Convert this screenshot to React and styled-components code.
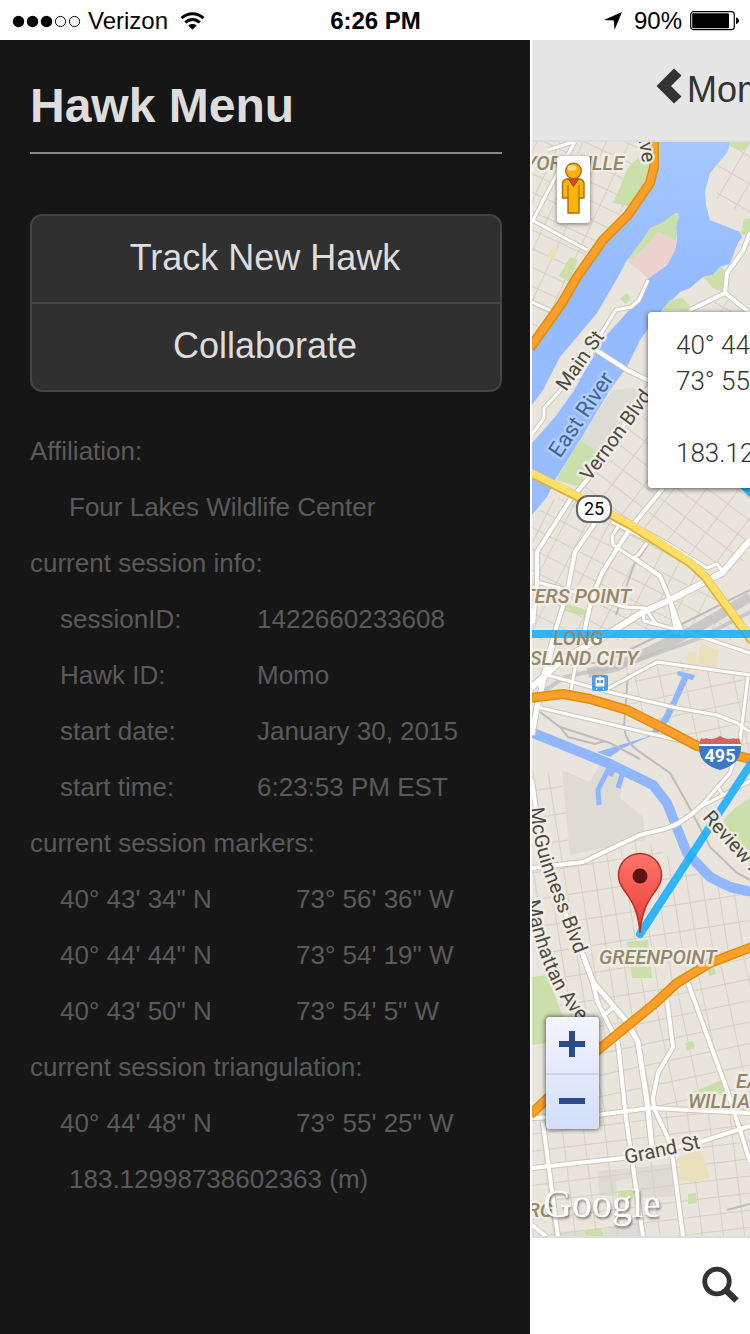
import React from "react";
import styled, { createGlobalStyle } from "styled-components";

const GlobalStyle = createGlobalStyle`
  *, *::before, *::after { box-sizing: border-box; }
  body {
    margin: 0;
    background: #fff;
    font-family: "Liberation Sans", Helvetica, Arial, sans-serif;
  }
  h1, h2, p, dl, dd, ul { margin: 0; padding: 0; }
`;

const Screen = styled.div`
  display: flex;
  flex-direction: column;
  min-height: 100vh;
`;

/* ---------- status bar ---------- */

const StatusBar = styled.header`
  display: grid;
  grid-template-columns: 1fr auto 1fr;
  align-items: center;
  height: 40px;
  padding: 0 11px 0 12px;
  background: #fff;
  color: #000;
  font-size: 24px;
  line-height: 42px;
`;

const StatusGroup = styled.div`
  display: flex;
  align-items: center;
  justify-content: ${(p) => (p.$end ? "flex-end" : "flex-start")};
  gap: ${(p) => (p.$end ? 8 : 6)}px;
`;

const Carrier = styled.span`
  margin-right: 6px;
`;

const Percent = styled.span`
  margin-left: 4px;
`;

const Clock = styled.strong`
  font-weight: 700;
`;

/* ---------- layout ---------- */

const Body = styled.div`
  flex: 1;
  display: grid;
  grid-template-columns: minmax(0, 530px) minmax(220px, 1fr);
`;

/* ---------- menu ---------- */

const Menu = styled.nav`
  padding: 34px 28px 48px 30px;
  background: #161616;
  color: #5a5a5a;
  font-size: 26px;
  line-height: 56px;
`;

const MenuTitle = styled.h1`
  padding-bottom: 14px;
  border-bottom: 2px solid #888;
  color: #ddd;
  font-size: 48px;
  line-height: 64px;
  font-weight: 700;
`;

const ButtonGroup = styled.div`
  margin: 60px 0 31px;
  border: 2px solid #444;
  border-radius: 12px;
  background: #303030;
  overflow: hidden;
`;

const MenuButton = styled.button`
  display: block;
  width: 100%;
  height: 86px;
  padding: 0 2px 2px 0;
  border: 0;
  background: transparent;
  color: #ddd;
  font: inherit;
  font-size: 36px;
  line-height: 84px;
  cursor: pointer;

  & + & {
    height: 88px;
    border-top: 2px solid #444;
  }
`;

const SectionTitle = styled.h2`
  font-size: 26px;
  line-height: 56px;
  font-weight: 400;
`;

const Detail = styled.p`
  padding-left: 39px;
`;

const InfoList = styled.dl`
  display: grid;
  grid-template-columns: 197px 1fr;
  padding-left: 30px;
`;

const CoordList = styled.ul`
  padding-left: 30px;
  list-style: none;
`;

const CoordRow = styled.li`
  display: grid;
  grid-template-columns: 236px 1fr;
`;

/* ---------- map page ---------- */

const Page = styled.main`
  display: flex;
  flex-direction: column;
  min-width: 0;
  border-left: 2px solid #fff;
  overflow: hidden;
`;

const PageHeader = styled.div`
  height: 102px;
  padding-left: 124px;
  border-bottom: 2px solid #ddd;
  background: #e6e6e6;
`;

const BackButton = styled.button`
  display: flex;
  align-items: center;
  gap: 5px;
  height: 100px;
  padding: 0;
  border: 0;
  background: transparent;
  color: #333;
  font: inherit;
  font-size: 36px;
  white-space: nowrap;
  cursor: pointer;

  svg { margin-bottom: 8px; flex: none; }
`;

const MapView = styled.div`
  position: relative;
  flex: 1;
  min-height: 400px;
  overflow: hidden;
  background: #e9e5dc;
`;

const MapCanvas = styled.svg`
  position: absolute;
  inset: 0;
  width: 100%;
  height: 100%;
  font-family: Roboto, sans-serif;
`;

const Pegman = styled.button`
  position: absolute;
  left: 25px;
  top: 14px;
  width: 33px;
  height: 67px;
  padding: 0;
  border: 0;
  border-radius: 3px;
  background: #fff;
  box-shadow: 0 1px 4px rgba(0, 0, 0, 0.5);

  svg { display: block; margin: 0 auto 4px; }
`;

const InfoWindow = styled.aside`
  position: absolute;
  left: 116px;
  top: 170px;
  width: 340px;
  height: 176px;
  padding: 15px 28px;
  border-radius: 4px;
  background: #fff;
  box-shadow: 0 1px 5px rgba(0, 0, 0, 0.65);
  color: #333;
  font-family: Roboto, sans-serif;
  font-size: 26px;
  font-weight: 300;
  line-height: 36px;
  white-space: nowrap;
`;

const InfoGap = styled.p`
  margin-top: 36px;
`;

const ZoomControl = styled.div`
  position: absolute;
  left: 14px;
  bottom: 107px;
  display: grid;
  width: 53px;
  border-radius: 4px;
  background: linear-gradient(#f3f5fd, #e1e8fa 55%, #d2defa);
  box-shadow: 0 0 4px 1px rgba(0, 0, 0, 0.55);
`;

const ZoomButton = styled.button`
  display: grid;
  place-items: center;
  height: 56px;
  padding: 0 2px 2px 0;
  border: 0;
  background: transparent;
  cursor: pointer;

  & + & { border-top: 2px solid #c9d5f3; }
`;

const Toolbar = styled.footer`
  height: 98px;
  padding: 28px 0 0 168px;
  border-top: 2px solid #ddd;
  background: #fff;
`;

const ToolButton = styled.button`
  display: block;
  padding: 0;
  border: 0;
  background: transparent;
  cursor: pointer;
`;

/* ---------- icons ---------- */

const SignalDots = () => (
  <svg width="70" height="14" viewBox="0 0 70 14" aria-label="Signal: 3 of 5">
    {[0, 1, 2].map((i) => (
      <circle key={i} cx={6.5 + i * 14} cy="7.5" r="5.7" />
    ))}
    {[3, 4].map((i) => (
      <circle key={i} cx={6.5 + i * 14} cy="7.5" r="5.1" fill="none" stroke="#000" />
    ))}
  </svg>
);

const Wifi = () => (
  <svg width="26" height="20" viewBox="0 0 26 20" aria-label="Wi-Fi">
    <g fill="none" stroke="#000" strokeWidth="3">
      <path d="M1.500 7.200C8 1.400 17 1.400 23.500 7.200" />
      <path d="M5.300 11.500c4.200-4 10.200-4 14.400 0" />
    </g>
    <path d="M12.500 18.800l-4.200-4.400c2.400-2 6-2 8.400 0z" />
  </svg>
);

const LocationArrow = () => (
  <svg width="18" height="18" viewBox="0 0 18 18" aria-label="Location on">
    <path d="M18 0L10.500 18 9.800 8.600 0 8z" />
  </svg>
);

const Battery = () => (
  <svg width="49" height="20" viewBox="0 0 49 20" aria-label="Battery">
    <rect x=".7" y=".7" width="43.600" height="18" rx="3" fill="none" stroke="#000" strokeWidth="1.200" />
    <rect x="2.200" y="2.200" width="36.800" height="15" rx="1" />
    <path d="M46 6.500c4 .8 4 5.600 0 6.500z" />
  </svg>
);

const ChevronLeft = () => (
  <svg width="26" height="36" viewBox="0 0 26 36">
    <path d="M0.500 18L18 0.500 25.500 7.500 15 18 25.500 28.500 18 35.500z" fill="#333" />
  </svg>
);

const SearchIcon = () => (
  <svg width="40" height="40" viewBox="0 0 40 40">
    <circle cx="17" cy="15.500" r="12.300" fill="none" stroke="#333" strokeWidth="4.800" />
    <path d="M24 22.500l12.500 12" stroke="#333" strokeWidth="6.500" />
  </svg>
);

const PegmanIcon = () => (
  <svg width="25" height="54" viewBox="0 0 25 54">
    <path
      d="M6 18h13q4 1 4 5v14h-5v15H7V37H1.500V23q0-4 4.500-5z"
      fill="#f9b606"
      stroke="#b06a10"
      strokeWidth="1.400"
    />
    <path d="M7 24v13M18 24v13" stroke="#b06a10" strokeWidth="1.200" />
    <path d="M7.500 18h10l-5 7.500z" fill="#d9433c" stroke="#b3372c" />
    <circle cx="12.500" cy="10" r="7.700" fill="#f9ae08" stroke="#b06a10" strokeWidth="1.400" />
    <ellipse cx="11" cy="7" rx="4.500" ry="3" fill="#fddc80" />
  </svg>
);

const PlusIcon = () => (
  <svg width="26" height="26" viewBox="0 0 26 26">
    <path d="M10 0h6v10H26v6H16V26h-6V16H0v-6h10z" fill="#2b4a8b" />
  </svg>
);

const MinusIcon = () => (
  <svg width="26" height="6" viewBox="0 0 26 6">
    <path d="M0 0h26v6H0z" fill="#2b4a8b" />
  </svg>
);

/* ---------- map drawing ---------- */

const water = [
  "654,142 654,167 650,183 628,215 603,240 577,277 562,303 532,348 532,515 547,497 555,480 580,440 610,390 627,367 640,340 662,310 680,292 690,288 703,277 713,275 720,267 730,264 735,250 738,243 742,237 740,232 710,220 706,205 705,192 710,173 727,153 731,142",
  "677,675 678,671 695,675 693,680 688,679 675,708 668,722 658,733 623,748 610,757 597,752 647,737 663,717 672,700 682,677",
];

const parks = [
  "640,156 650,156 650,180 628,206 613,203 628,168",
  "570,257 578,260 569,282 559,276",
  "729,142 750,142 743,151 729,146",
  "744,219 750,218 750,236 741,234",
  "703,277 713,275 720,267 726,271 724,293 713,288",
  "662,310 670,300 682,298 690,305 688,311",
  "580,440 598,453 580,487 556,480",
  "567,604 587,610 585,616 565,611",
  "723,820 735,808 750,798 750,852 736,842 728,838",
  "627,942 648,940 652,978 632,978",
  "532,977 547,975 563,1017 550,1018 546,1043 532,1045",
  "685,1043 693,1041 695,1048 687,1051",
  "690,1093 722,1080 730,1095 700,1096",
  "618,1191 635,1190 635,1198 618,1199",
  "584,1230 602,1228 604,1237 585,1237",
  "688,1194 696,1193 697,1203 688,1204",
  "532,1112 544,1105 544,1117 532,1118",
  "707,966 714,966 716,974 709,976",
];

const grounds = [
  "612,390 644,388 642,402 598,453 580,440",
  "562,770 590,782 600,764 625,775 620,798 643,817 645,840 590,851 570,855",
  "597,1171 632,1168 674,1163 675,1196 640,1198 632,1178 616,1181 617,1196 600,1196",
  "560,1232 584,1230 584,1237 560,1237",
  "604,1229 638,1222 642,1237 604,1237",
];

const sands = [
  "552,247 558,250 554,260 547,257",
  "688,652 696,652 697,675 686,664",
  "700,643 719,650 716,668 698,664",
  "678,1158 700,1149 710,1178 690,1182 679,1180",
  "617,1022 632,1032 626,1036 614,1034",
  "575,342 584,349 580,355 572,351",
];

const streetAreas = [
  ["gridA", "532,142 650,142 654,160 603,240 532,346"],
  ["gridB", "598,453 655,388 750,480 750,560 710,570 570,497"],
  ["gridC", "548,500 570,497 705,575 750,640 532,640 532,520"],
  ["gridD", "637,670 680,660 750,680 750,760 697,743 627,710"],
  ["gridE", "532,770 562,775 570,860 640,838 690,870 750,900 750,950 677,983 598,1050 563,1015 532,930"],
  ["gridD", "680,985 750,950 750,1110 532,1118 600,1050"],
  ["gridF", "532,1110 750,1105 750,1237 532,1237"],
  ["gridG", "712,142 750,142 750,215 718,205"],
  ["gridG", "700,310 726,295 750,310 750,330"],
];

const roads = [
  { w: 3, d: "M532 220l55 30M532 302l24 11M532 222l27-52 16-28M548 150l25-8" },
  { w: 3, d: "M648 280l-9 20-8 7-15 3-19 30-6 14" },
  { w: 4, d: "M596 350l31 20 25 12" },
  { w: 4, d: "M690 310l35-17 25 20M725 293l2-20 16-22 7-18" },
  { w: 3, d: "M532 434l12-16v-10l22-24 14-8" },
  { w: 4, d: "M655 378l-68 102-17 20-33 52v31l-4 40" },
  { w: 4, d: "M595 523l-20 29-8 41-14 45-13 50" },
  { w: 4, d: "M663 488l-30 37-15 22-16 26-10 24-9 40" },
  { w: 3, d: "M633 525l37 20 37 23 10-4 6 8" },
  { w: 6, d: "M750 540l-28 33-52 27-27 12-40 25-40 22-33 30" },
  { w: 3, d: "M612 522l42 21M618 527l-6 9 1 9 20 13 5-3 9-12" },
  { w: 4, d: "M634 558l26 18 10 24 13 36M670 600l7 34" },
  { w: 3, d: "M537 582l30 8 58 17 20 1 12 17M643 612l1 9 46 12 60 20" },
  { w: 3, d: "M547 675l66 18 64 15 40 7 20 8 13 9" },
  { w: 3, d: "M571 690l5-27M750 675l-93-13-50 27" },
  { w: 3, d: "M748 677l-8 63-10 33-30 34M700 807l50-26M717 785l6 10" },
  { w: 3, d: "M537 707l153 36" },
  { w: 5, d: "M553 643l-16 64-5 28" },
  { w: 4, d: "M532 780l4 30 12 60 20 50 15 35 10 27" },
  { w: 4, d: "M700 807q-22 20-40 23l-20 5-57 27-51 6" },
  { w: 5, d: "M583 955l10 27 34 40 11 20 9 60 5 45" },
  { w: 4, d: "M592 980l6 23 20 40 8 75 17 118M604 1015l10-8" },
  { w: 4, d: "M667 1000l6 47-15 26-5 25 1 10 14 30 5 22 10 76" },
  { w: 4, d: "M688 983l39 107 13 40 10 32" },
  { w: 4, d: "M532 1118l65-3 53-7 100 5" },
  { w: 4, d: "M532 1168l91-10 74-15 53-17" },
  { w: 4, d: "M543 1123l15 114M532 1225l15 12" },
];

const rails = [
  { w: 10, d: "M750 597l-60 35-72 34-30 7" },
  { w: 4, d: "M750 612l-50 26-70 25-65 14-33 22" },
  { w: 2, d: "M750 590l-96 48-50 24-50 4" },
  { w: 2, d: "M628 673l-4 54q2 15 13 23l33 23 17 30 23 44 27 26 13 7" },
  { w: 2, d: "M540 712l20 15 50 16 30 16M560 727l8 10 27 7 10-3M648 545l-14 20-18 50" },
  { w: 2, d: "M727 1210l23-6" },
];

const highways = [
  "M654 142v25l-4 16-22 32-25 25-26 37-15 26-32 45",
  "M530 698l33-4 27 5 37 11 36 18 34 18 53 13",
  "M752 947l-42 16-33 20-24 22-55 45-68 65",
];

const Grid = ({ id, angle, w, h }) => (
  <pattern id={id} width={w} height={h} patternUnits="userSpaceOnUse" patternTransform={`rotate(${angle})`}>
    <path d={`M0 0H${w}M0 0V${h}`} stroke="#d6d0c4" strokeWidth="2" />
  </pattern>
);

const Labels = ({ children, ...rest }) => (
  <g
    stroke="#f2efe9"
    strokeOpacity="0.85"
    strokeWidth="5"
    strokeLinejoin="round"
    paintOrder="stroke"
    fontSize="20"
    {...rest}
  >
    {children}
  </g>
);

const StreetMap = () => (
  <MapCanvas role="img" aria-label="Map of Greenpoint and Long Island City">
    <defs>
      <Grid id="gridA" angle={25} w={21} h={17} />
      <Grid id="gridB" angle={37} w={26} h={18} />
      <Grid id="gridC" angle={27} w={20} h={19} />
      <Grid id="gridD" angle={-12} w={24} h={21} />
      <Grid id="gridE" angle={-9} w={15} h={27} />
      <Grid id="gridF" angle={-7} w={21} h={17} />
      <Grid id="gridG" angle={30} w={20} h={24} />
      <linearGradient id="river" x1="0" y1="0" x2="0" y2="1">
        <stop offset="0" stopColor="#a5c8ff" />
        <stop offset="0.4" stopColor="#94baff" />
        <stop offset="1" stopColor="#99bdff" />
      </linearGradient>
      <linearGradient id="pin" x1="0" y1="0" x2="0" y2="1">
        <stop offset="0" stopColor="#fe7569" />
        <stop offset="1" stopColor="#ea3a34" />
      </linearGradient>
      <filter id="logoShadow" x="-10%" y="-10%" width="120%" height="130%">
        <feDropShadow dx="1" dy="2" stdDeviation="1" floodColor="#555" floodOpacity="0.8" />
      </filter>
      <path id="mcguinness" d="M530 808Q534 850 548 884L576 957" />
      <path id="manhattan" d="M526 901Q534 942 547 972Q560 1004 588 1030" />
    </defs>
    <g transform="translate(-532 -142)">
      {grounds.map((p) => <polygon key={p} points={p} fill="#dedad4" />)}
      {streetAreas.map(([id, p]) => <polygon key={p} points={p} fill={`url(#${id})`} />)}
      {sands.map((p) => <polygon key={p} points={p} fill="#ebdfbd" />)}
      <polygon points={water[0]} fill="url(#river)" />
      <polygon points={water[1]} fill="#90b6ff" />
      <polygon
        points="618,277 627,260 640,245 650,232 663,224 673,217 676,213 679,215 676,225 677,240 675,250 667,265 648,278 640,297 623,317 602,340 593,357 573,392 555,417 532,443 532,405 543,390 560,357 577,337 597,313"
        fill="#e9e5dc"
      />
      <polygon points="627,260 640,243 650,228 663,222 674,214 679,215 676,227 676,241 658,232 646,248 636,258" fill="#cadfaa" />
      <polygon points="658,232 676,241 675,250 667,265 648,279 638,269 627,262 640,252" fill="#ebd2cf" />
      <polygon points="627,293 631,298 626,304 620,299" fill="#cadfaa" />
      {parks.map((p) => <polygon key={p} points={p} fill="#cadfaa" />)}
      <g fill="none" stroke="#90b6ff">
        <path d="M533 733l77 31 43 21 14 18 20 50 23 24 20 10 22 5" strokeWidth="10" strokeLinejoin="round" />
        <path d="M610 766l-12 24 1 15" strokeWidth="5" />
        <path d="M623 772l-5 16M614 768l-4 8" strokeWidth="5" />
      </g>
      <g fill="none" stroke="#bdbdbd">
        {rails.map((r) => <path key={r.d} d={r.d} strokeWidth={r.w} opacity={r.w > 2 ? 0.7 : 1} />)}
      </g>
      <g fill="none" strokeLinejoin="round">
        {roads.map((r) => <path key={r.d} d={r.d} stroke="#cdc7ba" strokeWidth={r.w + 2} />)}
        {roads.map((r) => <path key={r.d} d={r.d} stroke="#fff" strokeWidth={r.w} />)}
        <path d="M530 473l40 20 60 32 60 38 15 14 47 64" stroke="#dcb13c" strokeWidth="9" />
        <path d="M530 472l40 20 60 32 60 38 15 14 47 64" stroke="#ffdf66" strokeWidth="7" />
        {highways.map((d) => <path key={d} d={d} stroke="#dd8f0c" strokeWidth="10" />)}
        {highways.map((d) => <path key={d} d={d} stroke="#fb9f2b" strokeWidth="7" />)}
      </g>

      <g fill="none" stroke="#10adff" strokeOpacity="0.85" strokeWidth="8" strokeLinecap="round">
        <path d="M528 634h226" />
        <path d="M640 934l116-178M742 484l12 12" />
      </g>

      <Labels fill="#958868" fontStyle="italic" fontWeight="500">
        <text x="624" y="170" textAnchor="end">YORKVILLE</text>
        <text x="631" y="603" textAnchor="end">HUNTERS POINT</text>
        <text x="553" y="645" strokeOpacity="0">LONG</text>
        <text x="638" y="665" textAnchor="end">ISLAND CITY</text>
        <text x="599" y="964">GREENPOINT</text>
        <text x="736" y="1088">EAST</text>
        <text x="688" y="1108">WILLIAMSBURG</text>
        <text x="553" y="1217" textAnchor="end">WILLIAMSBURG</text>
      </Labels>
      <Labels fill="#4f4a3f">
        <text transform="translate(637 131) rotate(80)">Ave</text>
        <text transform="translate(566 392) rotate(-55)">Main St</text>
        <text transform="translate(590 482) rotate(-54)">Vernon Blvd</text>
        <text transform="translate(702 818) rotate(48)">Review Ave</text>
        <text transform="translate(626 1164) rotate(-12)">Grand St</text>
        <text><textPath href="#mcguinness">McGuinness Blvd</textPath></text>
        <text><textPath href="#manhattan">Manhattan Ave</textPath></text>
      </Labels>
      <Labels fill="#3f6496" stroke="#b4cffb" fontSize="22">
        <text transform="translate(560 459) rotate(-56)">East River</text>
      </Labels>

      <rect x="577" y="496" width="34" height="26" rx="11" fill="#fff" stroke="#666" strokeWidth="2" />
      <text x="594" y="515" textAnchor="middle" fontSize="18" fill="#000">25</text>
      <path d="M699 746h42q1 18-21 24q-22-6-21-24z" fill="#3c78c8" />
      <path d="M699 744l2-6q3 2 5 0 6 3 14-2 8 5 14 2 2 2 5 0l2 6z" fill="#d36363" />
      <path d="M699 745h42" stroke="#fff" strokeWidth="2" />
      <text x="720" y="762" textAnchor="middle" fontSize="18" fontWeight="700" fill="#fff">495</text>
      <g transform="translate(592 675)">
        <rect width="16" height="16" rx="2" fill="#4a9be8" />
        <path d="M4 3h8v8H4zM5 13l-1 2M11 13l1 2M7 2h2" fill="#fff" stroke="#fff" />
        <path d="M5 5h2.500v3H5zM8.500 5H11v3H8.500z" fill="#4a9be8" />
      </g>

      <path
        d="M640 933c-2-26-10-34-16-43-4-6-5.500-9-5.500-15a21.500 21.500 0 0 1 43 0c0 6-1.500 9-5.500 15-6 9-14 17-16 43z"
        fill="url(#pin)"
        stroke="#b4322c"
        strokeWidth="1.500"
      />
      <circle cx="640" cy="876" r="7.500" fill="#5c1410" />

      <text
        x="543"
        y="1217"
        fill="#fff"
        fontFamily="'Liberation Serif', serif"
        fontSize="40"
        filter="url(#logoShadow)"
      >
        Google
      </text>
    </g>
  </MapCanvas>
);

/* ---------- data ---------- */

const sessionInfo = [
  ["sessionID:", "1422660233608"],
  ["Hawk ID:", "Momo"],
  ["start date:", "January 30, 2015"],
  ["start time:", "6:23:53 PM EST"],
];

const markers = [
  ["40° 43' 34\" N", "73° 56' 36\" W"],
  ["40° 44' 44\" N", "73° 54' 19\" W"],
  ["40° 43' 50\" N", "73° 54' 5\" W"],
];

const fix = ["40° 44' 48\" N", "73° 55' 25\" W"];
const radius = "183.12998738602363 (m)";

const Coordinates = ({ items }) => (
  <CoordList>
    {items.map(([lat, lng]) => (
      <CoordRow key={lat}>
        <span>{lat}</span>
        <span>{lng}</span>
      </CoordRow>
    ))}
  </CoordList>
);

export default function App() {
  return (
    <Screen>
      <GlobalStyle />
      <StatusBar>
        <StatusGroup>
          <SignalDots />
          <Carrier>Verizon</Carrier>
          <Wifi />
        </StatusGroup>
        <Clock>6:26 PM</Clock>
        <StatusGroup $end>
          <LocationArrow />
          <Percent>90%</Percent>
          <Battery />
        </StatusGroup>
      </StatusBar>
      <Body>
        <Menu>
          <MenuTitle>Hawk Menu</MenuTitle>
          <ButtonGroup>
            <MenuButton type="button">Track New Hawk</MenuButton>
            <MenuButton type="button">Collaborate</MenuButton>
          </ButtonGroup>
          <SectionTitle>Affiliation:</SectionTitle>
          <Detail>Four Lakes Wildlife Center</Detail>
          <SectionTitle>current session info:</SectionTitle>
          <InfoList>
            {sessionInfo.map(([label, value]) => (
              <React.Fragment key={label}>
                <dt>{label}</dt>
                <dd>{value}</dd>
              </React.Fragment>
            ))}
          </InfoList>
          <SectionTitle>current session markers:</SectionTitle>
          <Coordinates items={markers} />
          <SectionTitle>current session triangulation:</SectionTitle>
          <Coordinates items={[fix]} />
          <Detail>{radius}</Detail>
        </Menu>
        <Page>
          <PageHeader>
            <BackButton type="button">
              <ChevronLeft />
              Momo
            </BackButton>
          </PageHeader>
          <MapView>
            <StreetMap />
            <Pegman type="button" aria-label="Street View">
              <PegmanIcon />
            </Pegman>
            <InfoWindow>
              <p>{fix[0]}</p>
              <p>{fix[1]}</p>
              <InfoGap>{radius}</InfoGap>
            </InfoWindow>
            <ZoomControl>
              <ZoomButton type="button" aria-label="Zoom in"><PlusIcon /></ZoomButton>
              <ZoomButton type="button" aria-label="Zoom out"><MinusIcon /></ZoomButton>
            </ZoomControl>
          </MapView>
          <Toolbar>
            <ToolButton type="button" aria-label="Search"><SearchIcon /></ToolButton>
          </Toolbar>
        </Page>
      </Body>
    </Screen>
  );
}
